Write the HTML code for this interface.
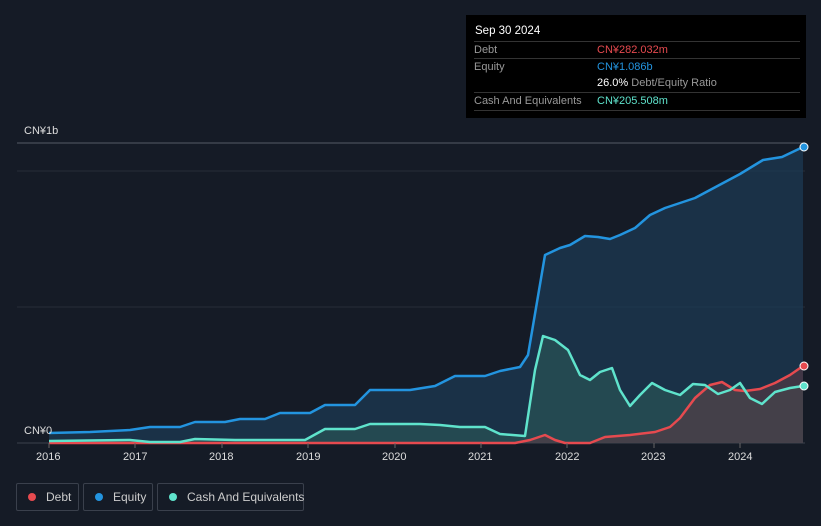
<!DOCTYPE html>
<html><head><meta charset="utf-8"><style>
body{margin:0;width:821px;height:526px;background:#151b26;font-family:"Liberation Sans",sans-serif;overflow:hidden;position:relative}
.tt{position:absolute;left:466px;top:15px;width:340px;height:103px;background:#000;font-size:11px}
.tt .h{position:absolute;left:9px;top:10px;color:#fff;font-size:11.5px}
.row{position:absolute;left:8px;width:326px;border-top:1px solid #333;height:17px;line-height:17px;color:#999}
.row span{position:absolute;left:123px}
.leg{position:absolute;top:483px;height:28px;border:1px solid #3a404c;border-radius:2px;color:#ccc;font-size:12px;line-height:26px;box-sizing:border-box;white-space:nowrap}
.leg i{display:inline-block;width:8px;height:8px;border-radius:50%;margin:0 10px 0 11px}
.ax{position:absolute;top:451px;color:#ddd;font-size:11px}
</style></head><body>
<svg width="821" height="526" style="position:absolute;left:0;top:0">
<line x1="17" y1="143" x2="805" y2="143" stroke="#555b66"/>
<line x1="17" y1="171" x2="805" y2="171" stroke="#262c38"/>
<line x1="17" y1="307" x2="805" y2="307" stroke="#262c38"/>
<line x1="17" y1="443" x2="805" y2="443" stroke="#3a404c"/>
<path d="M49,433 L90,432 L130,430 L150,427 L180,427 L195,422 L225,422 L240,419 L265,419 L280,413 L310,413 L325,405 L355,405 L370,390 L410,390 L435,386 L455,376 L485,376 L500,371 L520,367 L528,355 L545,255 L560,248 L570,245 L585,236 L598,237 L610,239 L620,235 L635,228 L650,215 L665,208 L680,203 L695,198 L710,190 L740,174 L763,160 L782,157 L803,147 L803,443 L49,443Z" fill="#1d3a55" fill-opacity="0.7"/>
<path d="M49,441 L130,440 L150,442 L180,442 L195,439 L235,440 L305,440 L325,429 L355,429 L370,424 L420,424 L440,425 L460,427 L485,427 L500,434 L525,436 L535,370 L543,336 L555,340 L568,350 L580,375 L590,380 L600,372 L612,368 L620,390 L630,406 L640,395 L652,383 L665,390 L680,395 L693,384 L705,385 L718,394 L730,390 L740,383 L750,398 L762,404 L775,392 L790,388 L803,386 L803,443 L49,443Z" fill="#2c5a58" fill-opacity="0.6"/>
<path d="M515,443 L530,440 L545,435 L555,440 L565,443 L590,443 L605,437 L630,435 L655,432 L670,427 L680,418 L695,398 L710,385 L722,382 L735,390 L745,391 L760,389 L775,383 L790,375 L803,366 L803,443Z" fill="#5a3a44" fill-opacity="0.6"/>
<g fill="none" stroke-width="2.5" stroke-linejoin="round">
<path stroke="#2394df" d="M49,433 L90,432 L130,430 L150,427 L180,427 L195,422 L225,422 L240,419 L265,419 L280,413 L310,413 L325,405 L355,405 L370,390 L410,390 L435,386 L455,376 L485,376 L500,371 L520,367 L528,355 L545,255 L560,248 L570,245 L585,236 L598,237 L610,239 L620,235 L635,228 L650,215 L665,208 L680,203 L695,198 L710,190 L740,174 L763,160 L782,157 L803,147"/>
<path stroke="#e64a4f" d="M49,443 L515,443 L530,440 L545,435 L555,440 L565,443 L590,443 L605,437 L630,435 L655,432 L670,427 L680,418 L695,398 L710,385 L722,382 L735,390 L745,391 L760,389 L775,383 L790,375 L803,366"/>
<path stroke="#5fe3cc" d="M49,441 L130,440 L150,442 L180,442 L195,439 L235,440 L305,440 L325,429 L355,429 L370,424 L420,424 L440,425 L460,427 L485,427 L500,434 L525,436 L535,370 L543,336 L555,340 L568,350 L580,375 L590,380 L600,372 L612,368 L620,390 L630,406 L640,395 L652,383 L665,390 L680,395 L693,384 L705,385 L718,394 L730,390 L740,383 L750,398 L762,404 L775,392 L790,388 L803,386"/>
</g>
<circle cx="804" cy="147" r="4" fill="#2394df" stroke="#fff" stroke-width="1"/>
<circle cx="804" cy="366" r="4" fill="#e64a4f" stroke="#fff" stroke-width="1"/>
<circle cx="804" cy="386" r="4" fill="#5fe3cc" stroke="#fff" stroke-width="1"/>
<g stroke="#666"><line x1="49" y1="443" x2="49" y2="448"/><line x1="135" y1="443" x2="135" y2="448"/><line x1="222" y1="443" x2="222" y2="448"/><line x1="308" y1="443" x2="308" y2="448"/><line x1="395" y1="443" x2="395" y2="448"/><line x1="481" y1="443" x2="481" y2="448"/><line x1="567" y1="443" x2="567" y2="448"/><line x1="654" y1="443" x2="654" y2="448"/><line x1="740" y1="443" x2="740" y2="448"/></g>
</svg>
<div style="position:absolute;left:24px;top:125px;color:#ddd;font-size:11px">CN¥1b</div>
<div style="position:absolute;left:24px;top:425px;color:#ddd;font-size:11px">CN¥0</div>
<div class="ax" style="left:36px">2016</div><div class="ax" style="left:123px">2017</div><div class="ax" style="left:209px">2018</div><div class="ax" style="left:296px">2019</div><div class="ax" style="left:382px">2020</div><div class="ax" style="left:468px">2021</div><div class="ax" style="left:555px">2022</div><div class="ax" style="left:641px">2023</div><div class="ax" style="left:728px">2024</div>
<div class="tt"><div class="h">Sep 30 2024</div>
<div class="row" style="top:26px">Debt<span style="color:#e64a4f">CN¥282.032m</span></div>
<div class="row" style="top:43px">Equity<span style="color:#2394df">CN¥1.086b</span></div>
<div class="row" style="top:60px;border-top:none"><span style="color:#999"><b style="color:#fff;font-weight:normal">26.0%</b> Debt/Equity Ratio</span></div>
<div class="row" style="top:77px">Cash And Equivalents<span style="color:#5fe3cc">CN¥205.508m</span></div>
<div class="row" style="top:95px;height:0"></div>
</div>
<div class="leg" style="left:16px;width:63px"><i style="background:#e64a4f"></i>Debt</div>
<div class="leg" style="left:83px;width:70px"><i style="background:#2394df"></i>Equity</div>
<div class="leg" style="left:157px;width:147px"><i style="background:#5fe3cc"></i>Cash And Equivalents</div>
</body></html>
